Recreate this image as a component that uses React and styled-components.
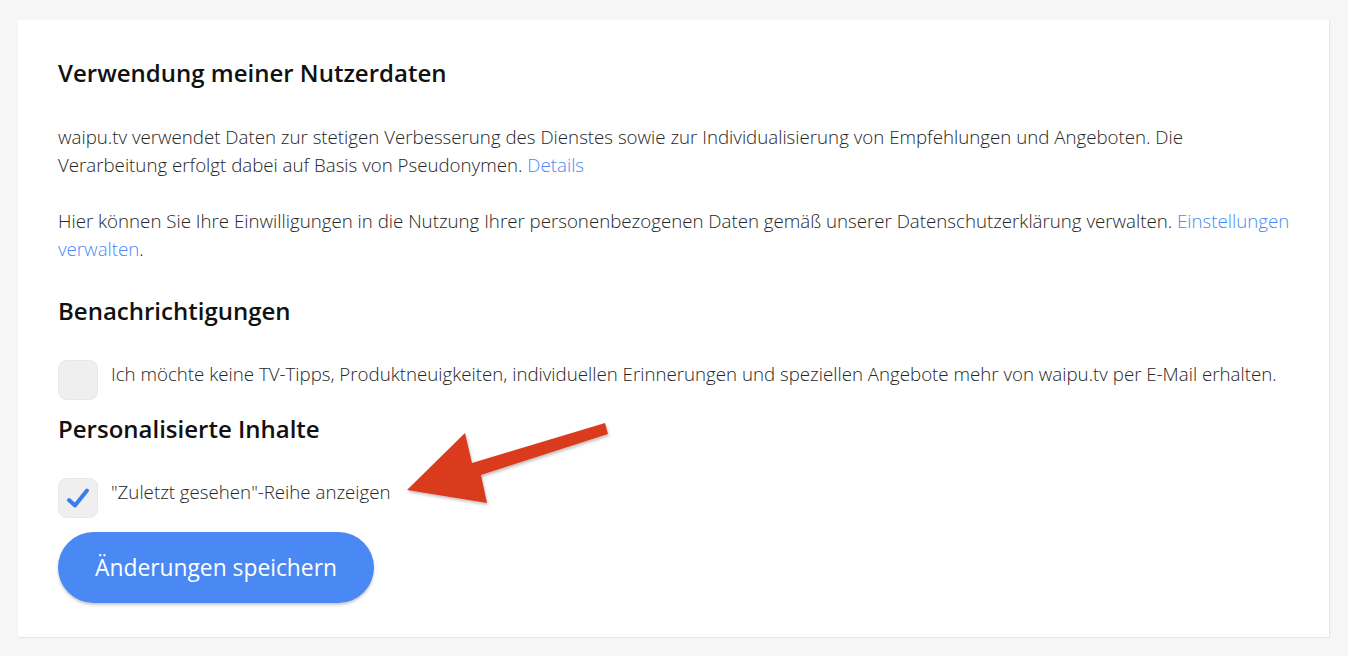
import React from "react";
import styled, { createGlobalStyle } from "styled-components";

const Global = createGlobalStyle`
  html, body { margin: 0; padding: 0; background: #f6f6f6; }
  body { font-family: "Open Sans", "Liberation Sans", sans-serif; color: #1d1d1d; }
`;

const Page = styled.div`
  padding: 20px 19px 19px 18px;
  box-sizing: border-box;
  min-height: 656px;
`;

const Card = styled.div`
  position: relative;
  background: #fff;
  box-shadow: 1px 1px 0 #e6e6e6, 1px 1px 2px rgba(0,0,0,0.04);
  padding: 37px 38px 34px 40px;
  min-height: 617px;
  box-sizing: border-box;
`;

const Heading = styled.h2`
  margin: 0;
  font-size: 24px;
  font-weight: 600;
  line-height: 32px;
  color: #111;
  margin-top: ${p => p.$mt || 0}px;
`;

const Para = styled.p`
  margin: ${p => p.$mt || 0}px 0 0;
  font-size: 18.7px;
  font-weight: 300;
  line-height: 28px;
  color: #262626;
`;

const Link = styled.a`
  color: #4a8af4;
  text-decoration: none;
`;

const CheckRow = styled.label`
  display: flex;
  align-items: flex-start;
  gap: 13px;
  margin-top: ${p => p.$mt || 0}px;
`;

const Box = styled.span`
  flex: none;
  width: 40px;
  height: 40px;
  border-radius: 9px;
  background: #efefef;
  box-shadow: inset 0 0 0 1px #e8e8e8;
  display: flex;
  align-items: center;
  justify-content: center;
`;

const CheckText = styled.span`
  font-size: 18.7px;
  font-weight: 300;
  line-height: 28px;
  color: #262626;
  white-space: nowrap;
`;

const Button = styled.button`
  display: block;
  margin-top: 14px;
  width: 316px;
  height: 71px;
  border: none;
  border-radius: 36px;
  background: #4a89f3;
  color: #fff;
  font-family: "Open Sans", "Liberation Sans", sans-serif;
  font-size: 22.8px;
  font-weight: 400;
  box-shadow: 0 2px 3px rgba(0,0,0,0.22);
  cursor: pointer;
`;

const ArrowLayer = styled.svg`
  position: absolute;
  left: 0;
  top: 0;
  width: 100%;
  height: 100%;
  pointer-events: none;
  overflow: visible;
`;

export default function App() {
  return (
    <>
      <Global />
      <Page>
        <Card>
          <Heading>Verwendung meiner Nutzerdaten</Heading>
          <Para $mt={34}>
            waipu.tv verwendet Daten zur stetigen Verbesserung des Dienstes sowie zur Individualisierung von Empfehlungen und Angeboten. Die Verarbeitung erfolgt dabei auf Basis von Pseudonymen. <Link href="#">Details</Link>
          </Para>
          <Para $mt={28}>
            Hier können Sie Ihre Einwilligungen in die Nutzung Ihrer personenbezogenen Daten gemäß unserer Datenschutzerklärung verwalten. <Link href="#">Einstellungen verwalten</Link>.
          </Para>
          <Heading $mt={32}>Benachrichtigungen</Heading>
          <CheckRow $mt={33}>
            <Box />
            <CheckText>Ich möchte keine TV-Tipps, Produktneuigkeiten, individuellen Erinnerungen und speziellen Angebote mehr von waipu.tv per E-Mail erhalten.</CheckText>
          </CheckRow>
          <Heading $mt={13}>Personalisierte Inhalte</Heading>
          <CheckRow $mt={33}>
            <Box>
              <svg width="24" height="24" viewBox="0 0 24 24">
                <path d="M3 14 L9 19.5 L21 4.5" fill="none" stroke="#3b7bf0" strokeWidth="4" strokeLinecap="round" strokeLinejoin="round" />
              </svg>
            </Box>
            <CheckText>"Zuletzt gesehen"-Reihe anzeigen</CheckText>
          </CheckRow>
          <Button>Änderungen speichern</Button>
          <ArrowLayer>
            <defs>
              <filter id="sh" x="-20%" y="-20%" width="140%" height="140%">
                <feDropShadow dx="1" dy="2" stdDeviation="1.5" floodColor="#000" floodOpacity="0.25" />
              </filter>
            </defs>
            <polygon
              filter="url(#sh)"
              fill="#d93a1f"
              points="587,403 590,414 463,455 469,483 389,470 447,413 454,443"
            />
          </ArrowLayer>
        </Card>
      </Page>
    </>
  );
}
